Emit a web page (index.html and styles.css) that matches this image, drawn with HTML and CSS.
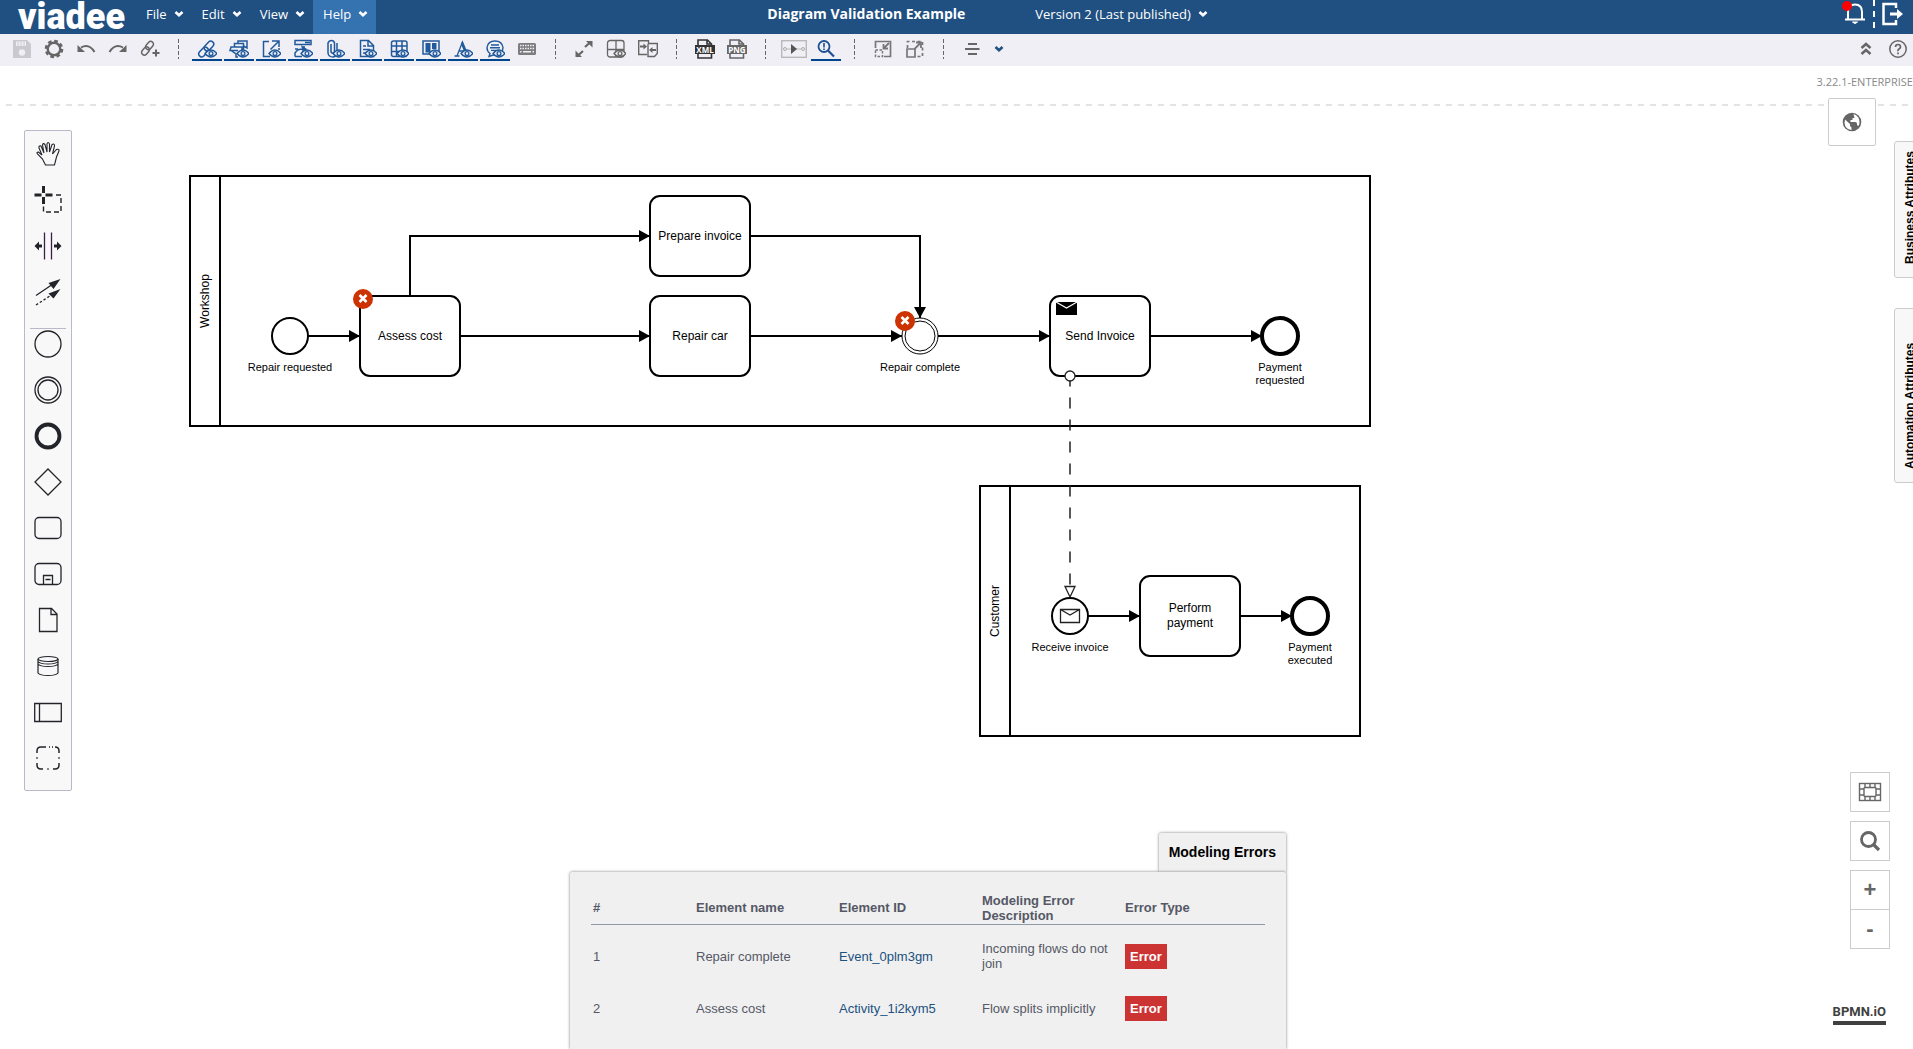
FILE: index.html
```html
<!DOCTYPE html>
<html lang="en">
<head>
<meta charset="utf-8">
<title>Diagram Validation Example</title>
<link rel="stylesheet" href="styles.css">
</head>
<body>
<svg class="defs" aria-hidden="true">
  <symbol id="chev" viewBox="0 0 10 8"><path d="M1.500 2 5 5.300 8.500 2" fill="none" stroke="currentColor" stroke-width="2.600"/></symbol>
  <symbol id="eye" viewBox="0 0 20 20"><path d="M8 14.500Q14 7.500 20 14.500Q14 21.500 8 14.500Z" fill="#f0eff5" stroke="currentColor" stroke-width="1.300"/><circle cx="14" cy="14.500" r="1.900" fill="none" stroke="currentColor" stroke-width="1.300"/></symbol>
</svg>

<header class="header">
  <a class="logo" href="#">viadee</a>
  <nav class="menus">
    <button class="menu">File <svg class="chev"><use href="#chev"/></svg></button>
    <button class="menu">Edit <svg class="chev"><use href="#chev"/></svg></button>
    <button class="menu">View <svg class="chev"><use href="#chev"/></svg></button>
    <button class="menu menu-active">Help <svg class="chev"><use href="#chev"/></svg></button>
  </nav>
  <div class="title-area">
    <h1 class="title">Diagram Validation Example</h1>
    <button class="version">Version 2 (Last published) <svg class="chev"><use href="#chev"/></svg></button>
  </div>
  <div class="session">
    <button class="head-btn" aria-label="Notifications">
      <svg width="28" height="28" viewBox="0 0 28 28"><path d="M4 19.500H24M7 19V12Q7 4.500 14 4.500T21 12V19" fill="none" stroke="#fff" stroke-width="2"/><path d="M11.500 22Q14 25 16.500 22Z" fill="#fff" stroke="#fff"/><circle cx="6" cy="6" r="5" fill="red"/></svg>
    </button>
    <span class="head-sep"></span>
    <button class="head-btn" aria-label="Log out">
      <svg width="28" height="28" viewBox="0 0 28 28"><path d="M17 8V4H4.500V24H17V20" fill="none" stroke="#fff" stroke-width="2.500"/><path d="M11 12.500H18V9L24 14 18 19V15.500H11Z" fill="#fff"/></svg>
    </button>
  </div>
</header>

<div class="toolbar" role="toolbar">
  <button class="tool" aria-label="Save"><svg viewBox="0 0 20 20"><path d="M1 1H15L19 5V19H1Z" fill="#c9c9cf"/><path d="M4 2.500H14V7H4Z" fill="#f0eff5"/><path d="M6 2.500V7M9 2.500V7M12 2.500V7" stroke="#c9c9cf"/><circle cx="10" cy="13.500" r="3.200" fill="#f0eff5"/></svg></button>
  <button class="tool" aria-label="Settings"><svg viewBox="0 0 20 20"><circle cx="10" cy="10" r="8" fill="none" stroke="currentColor" stroke-width="2.600" stroke-dasharray="3.600 2.683"/><circle cx="10" cy="10" r="6.300" fill="none" stroke="currentColor" stroke-width="2.400"/></svg></button>
  <button class="tool" aria-label="Undo"><svg viewBox="0 0 20 20"><path d="M5 8.500Q13 4 18.500 13" fill="none" stroke="currentColor" stroke-width="2"/><path d="M1.500 6V13H9Z" fill="currentColor"/></svg></button>
  <button class="tool" aria-label="Redo"><svg viewBox="0 0 20 20"><path d="M15 8.500Q7 4 1.500 13" fill="none" stroke="currentColor" stroke-width="2"/><path d="M18.500 6V13H11Z" fill="currentColor"/></svg></button>
  <button class="tool" aria-label="Add link"><svg viewBox="0 0 20 20"><g fill="none" stroke="currentColor" stroke-width="1.500"><rect x="-4.500" y="-2.700" width="9" height="5.500" rx="2.700" transform="translate(5.500 12) rotate(-48)"/><rect x="-4.500" y="-2.700" width="9" height="5.500" rx="2.700" transform="translate(9.500 6.500) rotate(-48)"/><path d="M16 10.500V17.500M12.500 14H19.500" stroke-width="2"/></g></svg></button>
  <span class="sep"></span>
  <button class="tool tool-on" aria-label="Show links"><svg viewBox="0 0 20 20"><g fill="none" stroke="currentColor" stroke-width="1.500"><rect x="-5.500" y="-3" width="11" height="6" rx="3" transform="translate(6.500 13) rotate(-48)"/><rect x="-5.500" y="-3" width="11" height="6" rx="3" transform="translate(12 7) rotate(-48)"/></g><use href="#eye"/></svg></button>
  <button class="tool tool-on" aria-label="Show layers"><svg viewBox="0 0 20 20"><path d="M9 5V2H18V9L14.500 7V4.500H5.500V8H13V11M14.500 7V11M5.500 8H2L1 11.500H9M2 11.500 7 15V18H9" fill="none" stroke="currentColor" stroke-width="1.500"/><use href="#eye"/></svg></button>
  <button class="tool tool-on" aria-label="Show references"><svg viewBox="0 0 20 20"><path d="M8 2.500H2.500V17.500H9M11 2H18V8M18 2 9.500 10.500M18 9V11" fill="none" stroke="currentColor" stroke-width="1.500"/><use href="#eye"/></svg></button>
  <button class="tool tool-on" aria-label="Show forms"><svg viewBox="0 0 20 20"><path d="M2 1.500H18V5.500H2ZM12 3.500H17M2 17.500H9M2 17.500V14Q5 9 10 10.500M2 10H5M11 7V14" fill="none" stroke="currentColor" stroke-width="1.500"/><path d="m8 6 6 4-4 4Z" fill="currentColor"/><use href="#eye"/></svg></button>
  <button class="tool tool-on" aria-label="Show attachments"><svg viewBox="0 0 20 20"><path d="M6 5V13Q8 15.500 9.500 13V4Q9 1.500 6.500 1.500T3 4V14Q3.500 18 8 18Q12 17.500 12 13V4" fill="none" stroke="currentColor" stroke-width="1.500"/><use href="#eye"/></svg></button>
  <button class="tool tool-on" aria-label="Show documentation"><svg viewBox="0 0 20 20"><path d="M3.500 1.500H11.500L16.500 6.500V17.500H3.500ZM11 1.500V7H16.500M6 7H9M6 10.500H13M6 14H9" fill="none" stroke="currentColor" stroke-width="1.500"/><use href="#eye"/></svg></button>
  <button class="tool tool-on" aria-label="Show table"><svg viewBox="0 0 20 20"><rect x="2.500" y="2" width="15.500" height="15.500" rx="2" fill="none" stroke="currentColor" stroke-width="1.500"/><path d="M2 7H18M2 12.500H18M7.500 2V17.500M13 2V17.500" stroke="currentColor" stroke-width="1.500"/><use href="#eye"/></svg></button>
  <button class="tool tool-on" aria-label="Show board"><svg viewBox="0 0 20 20"><path d="M2 2H18V15H2Z" fill="none" stroke="currentColor" stroke-width="1.500"/><path d="M4.500 4H9.500V13.500H4.500ZM11 4H15.500V10H11Z" fill="currentColor"/><use href="#eye"/></svg></button>
  <button class="tool tool-on" aria-label="Show text"><svg viewBox="0 0 20 20"><path d="M1.500 17H6.500M4 17 9.500 3 14 14M6 12H12" fill="none" stroke="currentColor" stroke-width="1.300"/><path d="M9 2.500 14.500 15H12L8 5Z" fill="currentColor"/><use href="#eye"/></svg></button>
  <button class="tool tool-on" aria-label="Show comments"><svg viewBox="0 0 20 20"><path d="M5 14.500Q2 12.500 2 8.500Q3 2 10 2T18 8.500Q18 15 10 15.500L4 17.500ZM6 6H14M5 8.700H15M6 11.400H14" fill="none" stroke="currentColor" stroke-width="1.400"/><use href="#eye"/></svg></button>
  <button class="tool" aria-label="Keyboard shortcuts"><svg viewBox="0 0 20 20"><rect x="1" y="4" width="18" height="12" rx="1.500" fill="#7d7d80"/><path d="M3 6.500H17M3 9.500H17" stroke="#f0eff5" stroke-width="1.500" stroke-dasharray="1.500 1"/><path d="M3 12.800H4.500M6 12.800H14M15.500 12.800H17" stroke="#f0eff5" stroke-width="1.500"/></svg></button>
  <span class="sep"></span>
  <button class="tool" aria-label="Fullscreen"><svg viewBox="0 0 20 20"><path d="M11 8 16 3.500M9 12 4 16.500" stroke="currentColor" stroke-width="2.200"/><path d="M12 2H18.500V8.500ZM1.500 11.500V18H8Z" fill="currentColor"/></svg></button>
  <button class="tool" aria-label="Show grid"><svg viewBox="0 0 20 20"><rect x="1.500" y="1.500" width="16.500" height="16.500" rx="2.500" fill="none" stroke="currentColor" stroke-width="1.300"/><path d="M10 1.500V18M1.500 10.500H18" stroke="currentColor" stroke-width="1.300"/><use href="#eye"/></svg></button>
  <button class="tool" aria-label="Compare versions"><svg viewBox="0 0 20 20"><path d="M9 15.500H.7V1.700H10.500V5M10.500 4.500H19.300V14.500L16.500 17.500H10V5" fill="none" stroke="currentColor" stroke-width="1.400"/><path d="M2 7.500H6M18 11H14" stroke="currentColor" stroke-width="1.800"/><path d="M5.500 4.500 9 7.500 5.500 10.500ZM14.500 8 11 11 14.500 14Z" fill="currentColor"/></svg></button>
  <span class="sep"></span>
  <button class="tool tool-dark" aria-label="Download XML"><svg viewBox="0 0 20 20"><path d="M3 6V1H12.500L16.500 5V6M3 14V19H16.500V14M12 1V5H16.500" fill="none" stroke="currentColor" stroke-width="1.600"/><rect y="6" width="20" height="9" fill="currentColor"/><text class="filetype" x="10" y="14" text-anchor="middle">XML</text></svg></button>
  <button class="tool" aria-label="Download PNG"><svg viewBox="0 0 20 20"><path d="M3 6V1H12.500L16.500 5V6M3 14V19H16.500V14M12 1V5H16.500" fill="none" stroke="currentColor" stroke-width="1.600"/><rect y="6" width="20" height="9" fill="currentColor"/><text class="filetype" x="10" y="14" text-anchor="middle">PNG</text></svg></button>
  <span class="sep"></span>
  <button class="tool" aria-label="Token simulation"><svg class="wide" viewBox="0 0 26 20"><rect x=".7" y="1.700" width="24.600" height="16.600" fill="none" stroke="#b9b9bc" stroke-width="1.400"/><circle cx="4" cy="10" r="1.500" fill="none" stroke="#aaa"/><circle cx="22" cy="10" r="1.500" fill="none" stroke="#aaa"/><path d="M6 10H20" stroke="#bbb"/><path d="M10 5 16 10 10 15Z" fill="#555"/></svg></button>
  <button class="tool tool-on" aria-label="Validate diagram"><svg viewBox="0 0 20 20"><circle cx="8" cy="7.500" r="5.500" fill="none" stroke="#1f4f94" stroke-width="1.800"/><path d="M12 11.500 18 17.500" stroke="#1f4f94" stroke-width="2.200"/><path d="M8 4V8.500M8 9.500V11" stroke="#1f4f94" stroke-width="1.600"/></svg></button>
  <span class="sep"></span>
  <button class="tool" aria-label="Collapse"><svg viewBox="0 0 20 20"><path d="M2.500 9V2.500H17.500V17.500H11" fill="none" stroke="#77777a" stroke-width="1.700"/><path d="M2.500 11H9.500V17.500H2.500Z" fill="none" stroke="#77777a" stroke-width="1.500" stroke-dasharray="2.500 1.500"/><path d="M16 4 11 9M10.500 5V9.500H15" fill="none" stroke="#77777a" stroke-width="1.800"/></svg></button>
  <button class="tool" aria-label="Expand"><svg viewBox="0 0 20 20"><path d="M2.500 9V2.500H17.500V17.500H11" fill="none" stroke="#77777a" stroke-width="1.700" stroke-dasharray="3 2.500"/><path d="M2 10H10V18H2Z" fill="none" stroke="#77777a" stroke-width="1.700"/><path d="M9.500 10 16 3.500M11 3.500H16V9" fill="none" stroke="#77777a" stroke-width="1.800"/></svg></button>
  <span class="sep"></span>
  <button class="tool" aria-label="Align"><svg viewBox="0 0 20 20"><path d="M6 5H15M3 10H17.500M6 15H15" stroke="currentColor" stroke-width="2"/></svg></button>
  <button class="tool tool-narrow" aria-label="More alignments"><svg class="chev"><use href="#chev"/></svg></button>
  <span class="spacer"></span>
  <button class="tool" aria-label="Collapse toolbar"><svg viewBox="0 0 20 20"><path d="M5.500 9 10 5 14.500 9M5.500 15 10 11 14.500 15" fill="none" stroke="currentColor" stroke-width="2.500"/></svg></button>
  <button class="tool" aria-label="Help"><svg viewBox="0 0 20 20"><circle cx="10" cy="10" r="8.200" fill="none" stroke="currentColor" stroke-width="1.500"/><path d="M7.500 8Q7.500 5.500 10 5.500T12.500 8Q12.500 9 11 10T10 12.300M10 13.500V15.300" fill="none" stroke="currentColor" stroke-width="1.700"/></svg></button>
</div>

<main class="canvas">
  <div class="dash-line"></div>
  <svg class="diagram" role="img" aria-label="Repair process">
    <defs>
      <marker id="arrow" viewBox="0 0 11 12" refX="11" refY="6" markerWidth="11" markerHeight="12" markerUnits="userSpaceOnUse" orient="auto"><path d="M0 0 11 6 0 12Z"/></marker>
    </defs>
    <g transform="translate(190 110)">
      <g class="shape">
        <rect width="1180" height="250"/><path d="M30 0V250"/>
        <rect x="790" y="310" width="380" height="250"/><path d="M820 310V560"/>
      </g>
      <g class="flow">
        <path d="M118 160H170"/><path d="M220 120V60H460"/><path d="M270 160H460"/>
        <path d="M560 60H730V142"/><path d="M560 160H712"/><path d="M748 160H860"/><path d="M960 160H1072"/>
        <path d="M898 440H950"/><path d="M1050 440H1102"/>
      </g>
      <g class="shape">
        <circle cx="100" cy="160" r="18"/>
        <rect x="170" y="120" width="100" height="80" rx="10"/>
        <rect x="460" y="20" width="100" height="80" rx="10"/>
        <rect x="460" y="120" width="100" height="80" rx="10"/>
        <circle class="thin" cx="730" cy="160" r="18"/><circle class="thin" cx="730" cy="160" r="15"/>
        <rect x="860" y="120" width="100" height="80" rx="10"/>
        <circle class="thick" cx="1090" cy="160" r="18"/>
        <circle cx="880" cy="440" r="18"/>
        <rect x="950" y="400" width="100" height="80" rx="10"/>
        <circle class="thick" cx="1120" cy="440" r="18"/>
      </g>
      <path d="M866 126H887V139H866Z"/><path d="M866 126 876.500 132 887 126" fill="none" stroke="#fff" stroke-width="1.200"/>
      <path class="line" d="M870.500 433.500H889.500V446.500H870.500ZM870.500 433.500 880 439 889.500 433.500"/>
      <path class="line message" d="M880 200V410"/>
      <circle class="line" cx="880" cy="200" r="5"/>
      <path class="line" d="M875 410.500H885L880 421Z"/>
      <g class="task-label">
        <text x="220" y="164">Assess cost</text><text x="510" y="64">Prepare invoice</text><text x="510" y="164">Repair car</text>
        <text x="910" y="164">Send Invoice</text><text x="1000" y="436">Perform</text><text x="1000" y="451">payment</text>
        <text transform="translate(19 125) rotate(-90)">Workshop</text>
        <text transform="translate(809 435) rotate(-90)">Customer</text>
      </g>
      <g class="event-label">
        <text x="100" y="195">Repair requested</text><text x="730" y="195">Repair complete</text>
        <text x="1090" y="195">Payment</text><text x="1090" y="208">requested</text>
        <text x="880" y="475">Receive invoice</text><text x="1120" y="475">Payment</text><text x="1120" y="488">executed</text>
      </g>
      <g class="badge">
        <circle cx="173" cy="123" r="10"/><path d="M169.500 119 176.500 126M176.500 119 169.500 126"/>
        <circle cx="715" cy="145" r="10"/><path d="M711.500 141 718.500 148M718.500 141 711.500 148"/>
      </g>
    </g>
  </svg>

  <aside class="palette">
    <button class="entry" aria-label="Hand tool"><svg viewBox="0 0 28 28"><path d="M11.500 25 8.500 19 3.500 14Q2 12 4.500 12L8 15 5 8Q4.500 5.500 7 6L10 13 8.500 5Q9 2.500 11 4.500L13 12 13 4Q14 1 15.500 4V12L18 4.500Q20.500 3 20.500 6L18.500 14 22.500 9.500Q25.500 8.500 25 11L22.500 17 20.500 25Z" fill="none" stroke="currentColor" stroke-width="1.100"/></svg></button>
    <button class="entry" aria-label="Lasso tool"><svg viewBox="0 0 28 28"><path d="M9.500 0V7M9.500 11V18M.5 9H7.500M11.500 9H18.500" stroke="currentColor" stroke-width="3"/><path d="M22 9H27V26H9.500V20" fill="none" stroke="currentColor" stroke-width="1.400" stroke-dasharray="5 3"/></svg></button>
    <button class="entry" aria-label="Space tool"><svg viewBox="0 0 28 28"><path d="M10.500 .5V27.500M17.500 .5V27.500" stroke="#3c1f4c" stroke-width="1.300"/><path d="M.5 14 5 9.500V12.500H8V15.500H5V18.500ZM27.500 14 23 9.500V12.500H20V15.500H23V18.500Z" fill="currentColor"/></svg></button>
    <button class="entry" aria-label="Connect tool"><svg viewBox="0 0 28 28"><path d="M2 17.500 19 6" stroke="currentColor" stroke-width="1.300"/><path d="M2 27 19 16" stroke="currentColor" stroke-width="1.300" stroke-dasharray="2.500 2"/><path d="M14.500 5 26.500 1 19.500 11ZM14.500 15.500 26.500 11 19.500 20.500Z" fill="currentColor"/></svg></button>
    <hr class="palette-sep">
    <button class="entry" aria-label="Start event"><svg viewBox="0 0 28 28"><circle cx="14" cy="14" r="13" fill="none" stroke="currentColor" stroke-width="1.300"/></svg></button>
    <button class="entry" aria-label="Intermediate event"><svg viewBox="0 0 28 28"><g fill="none" stroke="currentColor" stroke-width="1.300"><circle cx="14" cy="14" r="13"/><circle cx="14" cy="14" r="10"/></g></svg></button>
    <button class="entry" aria-label="End event"><svg viewBox="0 0 28 28"><circle cx="14" cy="14" r="11.500" fill="none" stroke="currentColor" stroke-width="3.800"/></svg></button>
    <button class="entry" aria-label="Gateway"><svg viewBox="0 0 28 28"><path d="M14 1 27 14 14 27 1 14Z" fill="none" stroke="currentColor" stroke-width="1.300"/></svg></button>
    <button class="entry" aria-label="Task"><svg viewBox="0 0 28 28"><rect x="1" y="3.500" width="26" height="21" rx="4" fill="none" stroke="currentColor" stroke-width="1.300"/></svg></button>
    <button class="entry" aria-label="Sub-process"><svg viewBox="0 0 28 28"><g fill="none" stroke="currentColor" stroke-width="1.300"><rect x="1" y="3.500" width="26" height="21" rx="4"/><path d="M9.500 24V15.500H18.500V24M11.500 19.500H16.500"/></g></svg></button>
    <button class="entry" aria-label="Data object"><svg viewBox="0 0 28 28"><path d="M5.500 2.500H17.500L23 8V25.500H5.500ZM17 2.500V8.500H23" fill="none" stroke="currentColor" stroke-width="1.300"/></svg></button>
    <button class="entry" aria-label="Data store"><svg viewBox="0 0 28 28"><g fill="none" stroke="currentColor" stroke-width="1.200"><ellipse cx="14" cy="7" rx="10" ry="2.500"/><path d="M4 7V21Q6 23.500 14 23.500T24 21V7M4 9.500Q6 12 14 12T24 9.500M4 12Q6 14.500 14 14.500T24 12"/></g></svg></button>
    <button class="entry" aria-label="Pool"><svg viewBox="0 0 28 28"><path d="M.7 5.500H27.300V23.500H.7ZM5.500 5.500V23.500" fill="none" stroke="currentColor" stroke-width="1.300"/></svg></button>
    <button class="entry" aria-label="Group"><svg viewBox="0 0 28 28"><path d="M3 9V7Q3 3 7 3H12M21 3Q25 3 25 7V9M19 3H18M25 19V21Q25 25 21 25H19M9 25H7Q3 25 3 21V19M15 3H16M3 13.300V14.700M25 13.300V14.700M13.300 25H14.700" fill="none" stroke="currentColor" stroke-width="1.500"/></svg></button>
  </aside>

  <span class="build">3.22.1-ENTERPRISE</span>
  <button class="box-btn globe" aria-label="Language"><svg width="20" height="20" viewBox="0 0 20 20"><circle cx="10" cy="10" r="9.300" fill="#666"/><path d="M3 7.500 8 12V14L9.500 15.500V18Q3 17 2.500 11ZM11.500 2Q17.500 4 17.500 10Q17.500 12.500 16.500 14L15 13V11L13.500 10H8.500V8H10.500V6H12.500Z" fill="#fff"/></svg></button>
  <div class="side-tabs">
    <button class="side-tab">Business Attributes</button>
    <button class="side-tab automation">Automation Attributes</button>
  </div>

  <div class="controls">
    <button class="box-btn" aria-label="Fit view"><svg width="24" height="20" viewBox="0 0 24 20"><g fill="none" stroke="#666" stroke-width="1.400"><rect x="1.500" y="1.500" width="21" height="17"/><rect x="6" y="5.500" width="12" height="9" rx="1"/><path d="M7 1.500V5M12 1.500V5M17 1.500V5M7 15V18.500M12 15V18.500M17 15V18.500M1.500 7H6M1.500 13H6M18 7H22.500M18 13H22.500"/></g></svg></button>
    <button class="box-btn" aria-label="Search"><svg width="24" height="24" viewBox="0 0 24 24"><circle cx="10.500" cy="10.500" r="7" fill="none" stroke="#666" stroke-width="2.800"/><path d="M15.500 15.500 21 21" stroke="#666" stroke-width="3.200"/></svg></button>
    <div class="zoom">
      <button class="box-btn">+</button>
      <button class="box-btn">-</button>
    </div>
  </div>
  <a class="bpmn" href="#">BPMN.iO</a>

  <section class="errors">
    <h2 class="errors-tab">Modeling Errors</h2>
    <div class="errors-body">
      <table class="error-table">
        <colgroup><col class="c-num"><col class="c-std"><col class="c-std"><col class="c-std"><col></colgroup>
        <thead><tr><th>#</th><th>Element name</th><th>Element ID</th><th>Modeling Error Description</th><th>Error Type</th></tr></thead>
        <tbody>
          <tr><td>1</td><td>Repair complete</td><td><a href="#">Event_0plm3gm</a></td><td>Incoming flows do not join</td><td><span class="tag">Error</span></td></tr>
          <tr><td>2</td><td>Assess cost</td><td><a href="#">Activity_1i2kym5</a></td><td>Flow splits implicitly</td><td><span class="tag">Error</span></td></tr>
        </tbody>
      </table>
    </div>
  </section>
</main>
</body>
</html>
```
FILE: styles.css
```css
* { box-sizing: border-box; }
body {
  margin: 0;
  height: 100vh;
  display: flex;
  flex-direction: column;
  overflow: hidden;
  background: #fff;
  font: 13px/15px Arial, "Liberation Sans", sans-serif;
}
button {
  margin: 0;
  padding: 0;
  border: 0;
  background: none;
  font: inherit;
  color: inherit;
}
a { text-decoration: none; color: #205081; }
.defs { position: absolute; width: 0; height: 0; }
.chev { width: 10px; height: 8px; }

/* header */
.header {
  display: flex;
  height: 34px;
  flex: none;
  background: #205081;
  color: #fff;
  font: 13px/28px "Open Sans", "Noto Sans", sans-serif;
}
.logo {
  width: 136px;
  padding-left: 18px;
  color: #fff;
  font: 900 36px/34px Roboto, sans-serif;
}
.menus { display: flex; }
.menu {
  display: flex;
  gap: 7px;
  padding: 10px 8px 0 10px;
  line-height: 8px;
}
.menu-active { background: #3572b0; }
.title-area {
  flex: 1;
  display: flex;
  justify-content: center;
  gap: 70px;
  padding-right: 242px;
}
.title { margin: 0; font-size: 14px; font-weight: bold; line-height: 28px; }
.version { display: flex; align-items: center; gap: 7px; height: 28px; }
.session { display: flex; gap: 4px; padding-right: 6px; }
.head-btn { width: 28px; height: 28px; }
.head-btn svg { display: block; }
.head-sep {
  width: 2px;
  height: 28px;
  background: repeating-linear-gradient(#fff 0 6px, transparent 6px 11px);
}

/* toolbar */
.toolbar {
  display: flex;
  align-items: flex-start;
  gap: 2px;
  flex: none;
  height: 32px;
  padding: 3px 0 0 7px;
  background: #f0eff5;
  color: #666;
}
.tool {
  display: flex;
  align-items: center;
  justify-content: center;
  flex: none;
  width: 30px;
  height: 24px;
  padding-top: 2px;
  border-bottom: 2px solid transparent;
}
.tool > svg { width: 20px; height: 20px; }
.tool > .wide { width: 26px; }
.tool > .chev { width: 10px; height: 8px; color: #205081; }
.tool-on { color: #205a9c; border-color: #00468c; }
.tool-dark { color: #333; }
.tool-narrow { width: 20px; }
.filetype { font: bold 8px "Open Sans", sans-serif; fill: #fff; }
.sep {
  width: 1px;
  height: 20px;
  margin: 2px 11px 0;
  background: repeating-linear-gradient(#666 0 4px, transparent 4px 6px);
}
.spacer { flex: 1; }

/* canvas */
.canvas { position: relative; flex: 1; overflow: hidden; }
.dash-line {
  position: absolute;
  top: 38px;
  width: 100%;
  height: 2px;
  background: linear-gradient(90deg, transparent 6px, #e3e3e3 6px) 0 0 / 12px 2px;
}
.diagram { position: absolute; width: 100%; height: 100%; overflow: visible; }
.shape { fill: #fff; stroke: #000; stroke-width: 2; }
.shape .thin { stroke-width: 1; }
.shape .thick { stroke-width: 4; }
.flow path { fill: none; stroke: #000; stroke-width: 2; marker-end: url(#arrow); }
.line { fill: #fff; stroke: #222; stroke-width: 1.3; }
.message { stroke-dasharray: 10 12; stroke-width: 1.5; stroke-linecap: round; }
.task-label { font-size: 12px; text-anchor: middle; }
.event-label { font-size: 11px; text-anchor: middle; }
.badge circle { fill: #c30; }
.badge path { fill: none; stroke: #fff; stroke-width: 2.6; }

.palette {
  position: absolute;
  top: 64px;
  left: 24px;
  width: 48px;
  display: flex;
  flex-direction: column;
  padding-bottom: 9px;
  background: #f8f8f8;
  border: 1px solid #b9b9c9;
  border-radius: 2px;
  color: #22242a;
}
.entry { height: 46px; display: flex; align-items: center; justify-content: center; }
.entry svg { width: 28px; height: 28px; }
.palette-sep {
  align-self: stretch;
  margin: 13px 5px -8px;
  border: 0;
  border-top: 1px solid #b9b9c9;
}

.build {
  position: absolute;
  top: 8px;
  right: 0;
  font: 11px/16px "Open Sans", sans-serif;
  color: #888;
}
.box-btn {
  display: flex;
  align-items: center;
  justify-content: center;
  width: 40px;
  height: 40px;
  border: 1px solid #ccc;
  background: #fff;
  color: #666;
  font: bold 22px/22px Arial, "Liberation Sans", sans-serif;
}
.globe {
  position: absolute;
  top: 32px;
  right: 37px;
  width: 48px;
  height: 48px;
  border-radius: 2px;
}
.side-tabs {
  position: absolute;
  top: 75px;
  right: -9px;
  display: flex;
  flex-direction: column;
  gap: 30px;
}
.side-tab {
  width: 28px;
  height: 137px;
  display: flex;
  padding: 13px 8px 0 4px;
  background: #f8f8f8;
  border: 1px solid #ccc;
  border-radius: 3px;
  color: #000;
  font-weight: bold;
  font-size: 12px;
  writing-mode: vertical-rl;
  transform: rotate(180deg);
}
.automation { height: 175px; }

.controls {
  position: absolute;
  right: 23px;
  bottom: 100px;
  display: flex;
  flex-direction: column;
  gap: 9px;
}
.zoom .box-btn + .box-btn { margin-top: -1px; }
.bpmn {
  position: absolute;
  right: 27px;
  bottom: 24px;
  border-bottom: 4px solid #404040;
  color: #404040;
  font: bold 13px/18px Roboto, sans-serif;
}

/* errors panel */
.errors {
  position: absolute;
  right: 627px;
  bottom: 0;
  width: 716px;
  display: flex;
  flex-direction: column;
  align-items: flex-end;
}
.errors-tab {
  margin: 0;
  padding: 0 10px;
  font-size: 14px;
  line-height: 39px;
  background: #f0f0f0;
  box-shadow: 0 0 3px #777;
  border-radius: 2px 2px 0 0;
}
.errors-body {
  position: relative;
  width: 100%;
  padding: 20px 21px 15px;
  background: #f0f0f0;
  box-shadow: 0 0 3px #777;
  border-radius: 2px 2px 0 0;
}
.error-table {
  width: 100%;
  table-layout: fixed;
  border-collapse: collapse;
  color: #555866;
}
.error-table tbody::before { content: ""; display: block; height: 5px; }
.c-num { width: 103px; }
.c-std { width: 143px; }
.error-table th {
  height: 33px;
  padding: 0 2px;
  text-align: left;
  border-bottom: 1px solid #8e9ba8;
}
.error-table td { height: 52px; padding: 0 2px; }
.error-table th:nth-child(4) { padding-right: 20px; }
.tag {
  display: inline-block;
  padding: 5px;
  background: #c33;
  color: #fff;
  font-weight: bold;
}
```
